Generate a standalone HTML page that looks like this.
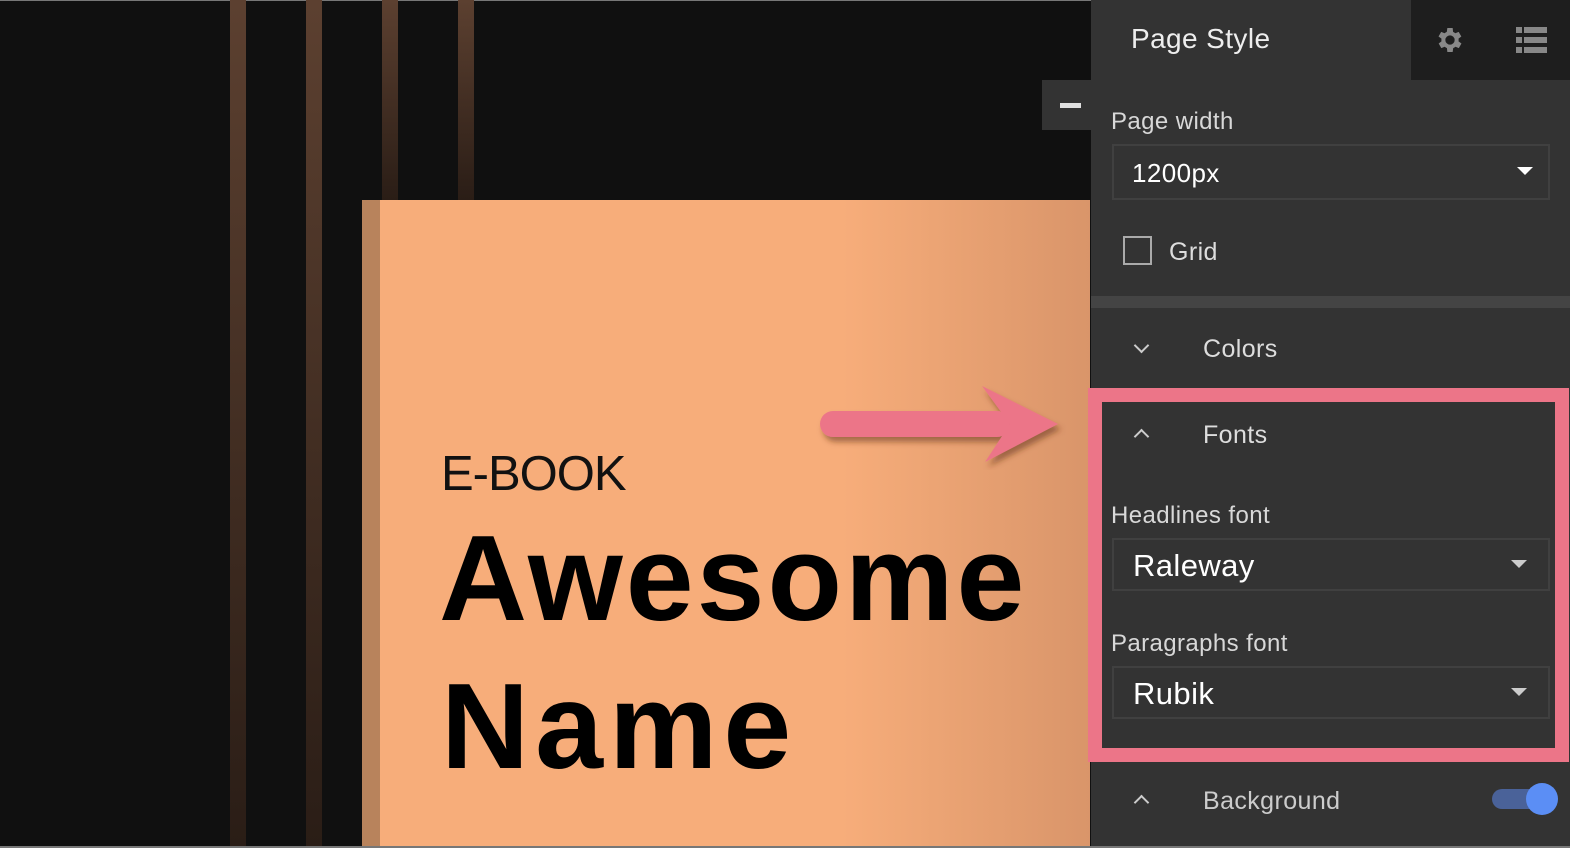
<!DOCTYPE html>
<html><head><meta charset="utf-8"><style>
*{margin:0;padding:0;box-sizing:border-box}
body{width:1570px;height:848px;overflow:hidden;background:#101010;position:relative;font-family:"Liberation Sans",sans-serif}
.a{position:absolute;line-height:1;white-space:nowrap}
.p{letter-spacing:0.4px}
.stripe{position:absolute;top:0;width:16px;height:848px;background:linear-gradient(#5c4030,#2a1d16)}
.sel{position:absolute;left:1112px;width:438px;border:2px solid #404040;background:#333}
.tri{position:absolute;width:0;height:0;border-left:8px solid transparent;border-right:8px solid transparent;border-top:8px solid #ddd}
.lbl{color:#d8d8d8;font-size:24px}
.chev{position:absolute;width:11px;height:11px;border-left:2.5px solid #ccc;border-top:2.5px solid #ccc}
</style></head><body>
<div style="position:absolute;left:0;top:0;width:1570px;height:1px;background:#777"></div>
<div class="stripe" style="left:230px"></div>
<div class="stripe" style="left:306px"></div>
<div class="stripe" style="left:382px;height:200px"></div>
<div class="stripe" style="left:458px;height:200px"></div>
<div style="position:absolute;left:362px;top:200px;width:728px;height:648px;background:linear-gradient(90deg,#f7ad7a 0%,#f7ad7a 66%,#d9956a 100%)"></div>
<div style="position:absolute;left:362px;top:200px;width:18px;height:648px;background:#b8835c"></div>
<div class="a" style="left:441px;top:450px;font-size:49px;color:#111;font-weight:300;letter-spacing:-1px">E-BOOK</div>
<div class="a" style="left:439px;top:517px;font-size:122px;font-weight:bold;color:#000;letter-spacing:3px">Awesome</div>
<div class="a" style="left:441px;top:665px;font-size:122px;font-weight:bold;color:#000;letter-spacing:6px">Name</div>
<svg style="position:absolute;left:810px;top:380px" width="260" height="100" viewBox="0 0 260 100">
<defs><filter id="s"><feDropShadow dx="3" dy="5" stdDeviation="3" flood-color="#5a2a10" flood-opacity="0.5"/></filter></defs>
<g filter="url(#s)" fill="#ec7588"><rect x="10" y="31" width="190" height="26" rx="13"/><path d="M172 6 L248 44 L175 82 L200 44 Z"/></g>
</svg>
<div style="position:absolute;left:1042px;top:80px;width:50px;height:50px;background:#333"></div>
<div style="position:absolute;left:1060px;top:103px;width:21px;height:5px;background:#e0e0e0"></div>
<div style="position:absolute;left:1091px;top:0;width:479px;height:848px;background:#333"></div>
<div style="position:absolute;left:1411px;top:0;width:159px;height:80px;background:#1e1e1e"></div>
<div class="a p" style="left:1131px;top:25px;font-size:28px;color:#eee">Page Style</div>
<svg style="position:absolute;left:1434px;top:24px" width="32" height="32" viewBox="0 0 24 24"><path fill="#888" d="M19.4 13a7.8 7.8 0 0 0 0-2l2.1-1.6-2-3.5-2.5 1a7 7 0 0 0-1.7-1L15 3h-4l-.4 2.9a7 7 0 0 0-1.7 1l-2.5-1-2 3.5L6.6 11a7.8 7.8 0 0 0 0 2l-2.1 1.6 2 3.5 2.5-1a7 7 0 0 0 1.7 1L11 21h4l.4-2.9a7 7 0 0 0 1.7-1l2.5 1 2-3.5zM13 15.5a3.5 3.5 0 1 1 0-7 3.5 3.5 0 0 1 0 7z" transform="translate(-1 0)"/></svg>
<svg style="position:absolute;left:1516px;top:27px" width="31" height="26" viewBox="0 0 31 26"><g fill="#888"><rect x="0" y="0" width="6" height="6"/><rect x="8" y="0" width="23" height="6"/><rect x="0" y="10" width="6" height="6"/><rect x="8" y="10" width="23" height="6"/><rect x="0" y="20" width="6" height="6"/><rect x="8" y="20" width="23" height="6"/></g></svg>
<div class="a lbl p" style="left:1111px;top:110px">Page width</div>
<div class="sel" style="top:144px;height:56px"></div>
<div class="a p" style="left:1132px;top:160px;font-size:26px;color:#fff">1200px</div>
<div class="tri" style="left:1517px;top:167px;border-top-color:#fff"></div>
<div style="position:absolute;left:1123px;top:236px;width:29px;height:29px;border:2px solid #aaa"></div>
<div class="a p" style="left:1169px;top:240px;font-size:25px;color:#ddd">Grid</div>
<div style="position:absolute;left:1091px;top:296px;width:479px;height:12px;background:#444"></div>
<div class="chev" style="left:1136px;top:340px;transform:rotate(225deg)"></div>
<div class="a p" style="left:1203px;top:337px;font-size:25px;color:#ddd">Colors</div>
<div style="position:absolute;left:1088px;top:388px;width:481px;height:374px;border:14px solid #ec7588;background:#333"></div>
<div class="chev" style="left:1136px;top:431px;transform:rotate(45deg)"></div>
<div class="a p" style="left:1203px;top:423px;font-size:25px;color:#ddd">Fonts</div>
<div class="a lbl p" style="left:1111px;top:504px">Headlines font</div>
<div class="sel" style="top:538px;height:53px"></div>
<div class="a p" style="left:1133px;top:550px;font-size:31px;color:#fff">Raleway</div>
<div class="tri" style="left:1511px;top:560px;border-top-color:#ccc"></div>
<div class="a lbl p" style="left:1111px;top:632px">Paragraphs font</div>
<div class="sel" style="top:666px;height:53px"></div>
<div class="a p" style="left:1133px;top:678px;font-size:31px;color:#fff">Rubik</div>
<div class="tri" style="left:1511px;top:688px;border-top-color:#ccc"></div>
<div class="chev" style="left:1136px;top:797px;transform:rotate(45deg)"></div>
<div class="a p" style="left:1203px;top:789px;font-size:25px;color:#ccc">Background</div>
<div style="position:absolute;left:1492px;top:789px;width:60px;height:20px;border-radius:10px;background:#4a6299"></div>
<div style="position:absolute;left:1526px;top:783px;width:32px;height:32px;border-radius:50%;background:#5b8ef5"></div>
<div style="position:absolute;left:0;top:846px;width:1570px;height:2px;background:#777"></div>
</body></html>
